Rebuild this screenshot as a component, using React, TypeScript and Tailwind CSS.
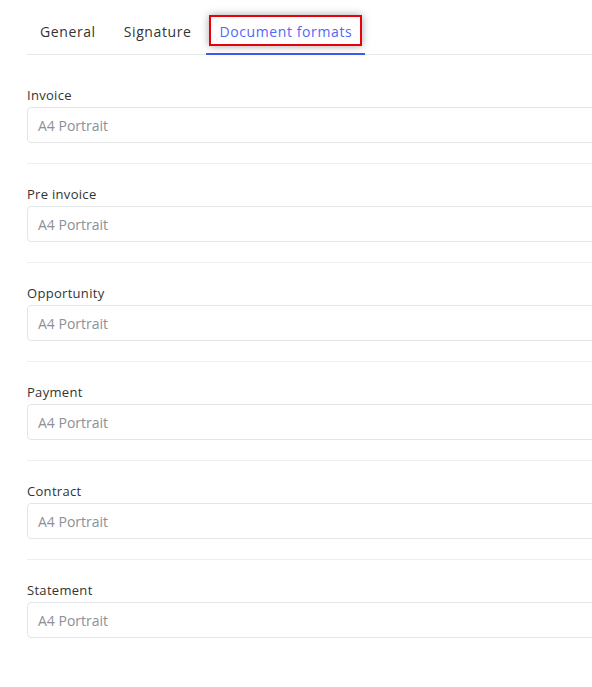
import React from 'react';

const FORMATS = ['Invoice', 'Pre invoice', 'Opportunity', 'Payment', 'Contract', 'Statement'];
const TABS = ['General', 'Signature', 'Document formats'];

export default function App() {
  const active = 'Document formats';

  return (
    <div
      className="w-[592px] h-[687px] overflow-hidden bg-white text-[#333]"
      style={{ fontFamily: '"Open Sans", "Liberation Sans", sans-serif' }}
    >
      <div className="w-[640px] pl-[27px]">
        {/* Tabs */}
        <nav className="mt-[11px] flex gap-[2px] border-b border-[#e6e8ea]">
          {TABS.map((tab) => (
            <div
              key={tab}
              className={`relative -mb-px px-[13px] py-[11px] text-[14px] leading-5 tracking-[0.6px] border-b-2 ${
                tab === active ? 'border-[#3d5af1] text-[#5567f7]' : 'border-transparent text-[#333]'
              }`}
            >
              {tab}
              {tab === active && (
                <span className="absolute left-[3px] right-[3px] top-[4px] h-[31px] border-2 border-[#e8000b] shadow-[0_0_8px_rgba(0,0,0,0.35)]" />
              )}
            </div>
          ))}
        </nav>

        {/* Format fields */}
        <div className="mt-[10px]">
          {FORMATS.map((name, i) => (
            <div
              key={name}
              className={`pt-5 pb-5 ${i < FORMATS.length - 1 ? 'border-b border-[#eceef0]' : ''}`}
            >
              <label className="block text-[13px] leading-5 mb-[2px] tracking-[0.3px] text-[#333]">{name}</label>
              <div className="h-[36px] rounded-[4px] border border-[#e3e6e8] px-[10px] flex items-center text-[14px] text-[#8b9099]">
                A4 Portrait
              </div>
            </div>
          ))}
        </div>
      </div>
    </div>
  );
}
